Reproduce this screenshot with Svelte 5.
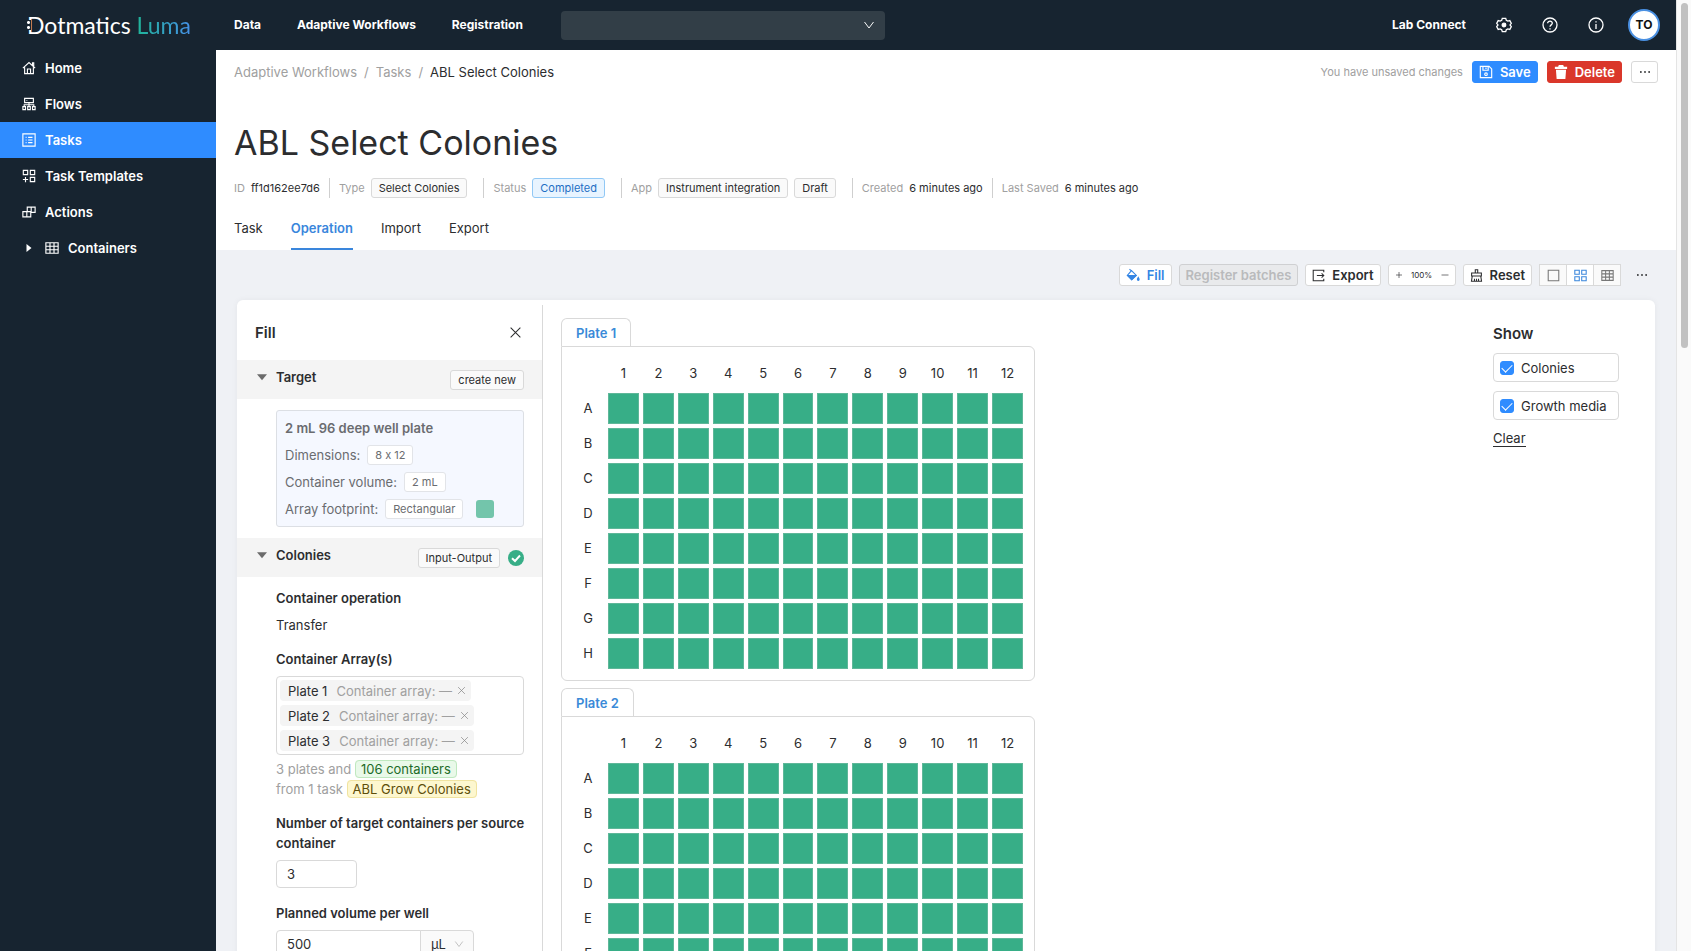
<script lang="ts">
	type NavItem = { label: string; icon: string; active?: boolean; nested?: boolean };

	const topLinks = ['Data', 'Adaptive Workflows', 'Registration'];

	const navItems: NavItem[] = [
		{ label: 'Home', icon: 'home' },
		{ label: 'Flows', icon: 'flows' },
		{ label: 'Tasks', icon: 'tasks', active: true },
		{ label: 'Task Templates', icon: 'templates' },
		{ label: 'Actions', icon: 'actions' },
		{ label: 'Containers', icon: 'table', nested: true }
	];

	const tabs = ['Task', 'Operation', 'Import', 'Export'];
	const rows = ['A', 'B', 'C', 'D', 'E', 'F', 'G', 'H'];
	const columns = Array.from({ length: 12 }, (_, i) => i + 1);
	const plates = ['Plate 1', 'Plate 2', 'Plate 3'];

	let activeTab = $state('Operation');
	let view = $state('grid');
	let zoom = $state(100);
	let selected = $state([...plates]);
	let targetCount = $state('3');
	let volume = $state('500');
	let layers = $state([
		{ id: 'colonies', label: 'Colonies', checked: true },
		{ id: 'growth', label: 'Growth media', checked: true }
	]);

	function removePlate(name: string) {
		selected = selected.filter((p) => p !== name);
	}

	function clearLayers() {
		layers.forEach((l) => (l.checked = false));
	}
</script>

{#snippet icon(name: string, size: number = 14)}
	<svg class="icon" width={size} height={size} viewBox="0 0 16 16" aria-hidden="true">
		{#if name === 'home'}
			<path d="M1 8.2 8 1.8l7 6.4M3 7v7.5h10V7M12 5V2.2h1.4v4M6.2 14.5V9.2h3.6v5.3" />
		{:else if name === 'flows'}
			<path d="M3 1.5h10v5H3zM5.2 4h.8M8 6.5V11M2.5 11V8.8h11V11M1 11h3v3.5H1zM6.5 11h3v3.5h-3zM12 11h3v3.5h-3z" />
		{:else if name === 'tasks'}
			<path d="M1 1h14v14H1zM4.2 5h1M7 5h5M4.2 8h1M7 8h5M4.2 11h1M7 11h5" />
		{:else if name === 'templates'}
			<path d="M1.5 1.5h5v5h-5zM9.5 1.5h5v5h-5zM9.5 9.5h5v5h-5zM4 9v6M1 12h6" />
		{:else if name === 'actions'}
			<path d="M1 7.5h9v6H1zM5.5 7.5v6M6 7.5v-5h9v6h-5M10.5 2.5v6" />
		{:else if name === 'table'}
			<path d="M1 2h14v12H1zM1 6h14M1 10h14M5.7 2v12M10.3 2v12" />
		{:else if name === 'gear'}
			<path d="M6.3 1.3h3.4l.6 1.9 1.5.9 2-.5 1.5 2.7L14 7.9l1.3 1.8-1.5 2.7-2-.5-1.5.9-.6 1.9H6.3l-.6-1.9-1.5-.9-2 .5L.7 9.7 2 7.9.7 6.3l1.5-2.7 2 .5 1.5-.9z" />
			<circle cx="8" cy="8" r="1.8" fill="currentColor" />
		{:else if name === 'help'}
			<circle cx="8" cy="8" r="7" />
			<path d="M5.6 6.3C5.6 3.4 10.5 3.6 10.3 6.3 10.2 7.9 8 7.9 8 9.8M8 11.2v1.2" />
		{:else if name === 'info'}
			<circle cx="8" cy="8" r="7" />
			<path d="M8 4.2v1.3M8 7v5" />
		{:else if name === 'save'}
			<path d="M1.5 1.5h10l3 3v10h-13zM4.5 1.5V6h6V1.5M8 2.8v1.8" />
			<circle cx="8" cy="10.5" r="1.5" />
		{:else if name === 'trash'}
			<path class="solid" d="M5.5 0h5l.8 2H15v2.5H1V2h3.7zM2.200 5.500h11.600L13 16H3z" />
		{:else if name === 'fill'}
			<path d="M4 1.200 6 3.200M6.300 3 11.800 8.500 6.500 13.500 1.500 8.500z" />
			<path class="solid" d="M1 8h11.500l-6 6.300z" />
			<path class="solid" d="M14 9.500c.9 1.700 1.600 2.600 1.600 3.700a1.600 1.600 0 0 1-3.200 0c0-1.100.8-2 1.600-3.700z" />
		{:else if name === 'export'}
			<path d="M14.500 4V1.500h-13v13h13V12M6 8h8.500M11.800 5.300 14.500 8l-2.700 2.700" />
		{:else if name === 'reset'}
			<path d="M6.500 5V1h3v4M2 5h12v3.500H2zM2.800 8.500 1.800 15h12.400l-1-6.500M5.500 15v-3M8 15v-3M10.500 15v-3" />
		{:else if name === 'square'}
			<path d="M1.500 1.500h13v13h-13z" />
		{:else if name === 'grid'}
			<path d="M1 1.500h5.500v5H1zM9.500 1.500H15v5H9.500zM1 9.500h5.500v5H1zM9.500 9.500H15v5H9.500z" />
		{:else if name === 'chevron'}
			<path d="M2 4l6 8 6-8" />
		{:else if name === 'close'}
			<path d="M2 2l12 12M14 2 2 14" />
		{:else if name === 'plus'}
			<path d="M8 2v12M2 8h12" />
		{:else if name === 'minus'}
			<path d="M1 8h14" />
		{:else if name === 'more'}
			<circle class="solid" cx="2.500" cy="8" r="1.200" />
			<circle class="solid" cx="8" cy="8" r="1.200" />
			<circle class="solid" cx="13.500" cy="8" r="1.200" />
		{:else if name === 'done'}
			<circle class="done" cx="8" cy="8" r="8" />
			<path class="done-tick" d="M4 8.200 7 11l5-5.500" />
		{:else if name === 'caret-right'}
			<path class="solid" d="M4 1.500 12 8l-8 6.500z" />
		{:else if name === 'caret-down'}
			<path class="solid" d="M0 3.500h16L8 13z" />
		{/if}
	</svg>
{/snippet}

<div class="window">
	<div class="app">
		<header class="topbar">
			<a class="logo" href="#home"><span class="brand">Dotmatics</span> <span class="luma">Luma</span></a>
			<nav class="top-links">
				{#each topLinks as link}
					<a href="#{link}">{link}</a>
				{/each}
			</nav>
			<div class="search">
				<select aria-label="Workspace"><option></option></select>
				{@render icon('chevron', 12)}
			</div>
			<div class="top-right">
				<a href="#lab-connect">Lab Connect</a>
				<button aria-label="Settings">{@render icon('gear', 16)}</button>
				<button aria-label="Help">{@render icon('help', 16)}</button>
				<button aria-label="Information">{@render icon('info', 16)}</button>
				<button class="avatar">TO</button>
			</div>
		</header>

		<div class="body">
			<nav class="sidebar">
				{#each navItems as item}
					<a href="#{item.label}" class:active={item.active}>
						{#if item.nested}
							<span class="expander">{@render icon('caret-right', 10)}</span>
						{/if}
						{@render icon(item.icon)}
						{item.label}
					</a>
				{/each}
			</nav>

			<main>
				<div class="page-head">
					<div class="crumb-row">
						<div class="crumbs">
							<a href="#workflows">Adaptive Workflows</a>
							<span>/</span>
							<a href="#tasks">Tasks</a>
							<span>/</span>
							<span class="current">ABL Select Colonies</span>
						</div>
						<div class="head-actions">
							<span class="unsaved">You have unsaved changes</span>
							<button class="btn primary">{@render icon('save')}Save</button>
							<button class="btn danger">{@render icon('trash')}Delete</button>
							<button class="btn more" aria-label="More">{@render icon('more', 12)}</button>
						</div>
					</div>

					<h1>ABL Select Colonies</h1>

					<div class="meta">
						<div><span>ID</span><b>ff1d162ee7d6</b></div>
						<div class="tagged"><span>Type</span><em class="tag">Select Colonies</em></div>
						<div class="tagged"><span>Status</span><em class="tag blue">Completed</em></div>
						<div class="tagged">
							<span>App</span><em class="tag">Instrument integration</em><em class="tag">Draft</em>
						</div>
						<div><span>Created</span><b>6 minutes ago</b></div>
						<div><span>Last Saved</span><b>6 minutes ago</b></div>
					</div>

					<div class="tabs" role="tablist">
						{#each tabs as tab}
							<button
								role="tab"
								aria-selected={activeTab === tab}
								class:active={activeTab === tab}
								onclick={() => (activeTab = tab)}>{tab}</button
							>
						{/each}
					</div>
				</div>

				<div class="toolbar">
					<button class="btn link">{@render icon('fill')}Fill</button>
					<button class="btn" disabled>Register batches</button>
					<button class="btn">{@render icon('export', 13)}Export</button>
					<div class="zoom">
						<button aria-label="Zoom in" onclick={() => (zoom += 10)}>{@render icon('plus', 8)}</button>
						<span>{zoom}%</span>
						<button aria-label="Zoom out" onclick={() => (zoom -= 10)}>{@render icon('minus', 8)}</button>
					</div>
					<button class="btn">{@render icon('reset', 13)}Reset</button>
					<div class="views">
						{#each ['square', 'grid', 'table'] as v}
							<button aria-label="{v} view" class:active={view === v} onclick={() => (view = v)}>
								{@render icon(v, 13)}
							</button>
						{/each}
					</div>
					<button class="bare" aria-label="More options">{@render icon('more', 12)}</button>
				</div>

				<div class="card">
					<aside class="fill-panel">
						<div class="panel-title">
							<h2>Fill</h2>
							<button aria-label="Close">{@render icon('close', 13)}</button>
						</div>

						<div class="section-head">
							<h3>{@render icon('caret-down', 10)}Target</h3>
							<em class="tag">create new</em>
						</div>
						<div class="section">
							<div class="target">
								<h4>2 mL 96 deep well plate</h4>
								<p>Dimensions: <em class="tag">8 x 12</em></p>
								<p>Container volume: <em class="tag">2 mL</em></p>
								<p>Array footprint: <em class="tag">Rectangular</em><i class="swatch"></i></p>
							</div>
						</div>

						<div class="section-head">
							<h3>{@render icon('caret-down', 10)}Colonies</h3>
							<em class="tag">Input-Output</em>
							{@render icon('done', 16)}
						</div>
						<div class="section form">
							<h4>Container operation</h4>
							<p class="value">Transfer</p>

							<h4>Container Array(s)</h4>
							<div class="multi">
								{#each selected as plate}
									<span class="chip">
										{plate}
										<small>Container array: —</small>
										<button aria-label="Remove {plate}" onclick={() => removePlate(plate)}>
											{@render icon('close', 9)}
										</button>
									</span>
								{/each}
							</div>
							<p class="summary">
								3 plates and <mark class="green">106 containers</mark><br />
								from 1 task <mark>ABL Grow Colonies</mark>
							</p>

							<label for="target-count">Number of target containers per source container</label>
							<input id="target-count" class="count" type="text" bind:value={targetCount} />

							<label for="volume">Planned volume per well</label>
							<div class="with-unit">
								<input id="volume" type="text" bind:value={volume} />
								<div class="unit">
									<select aria-label="Unit"><option>µL</option></select>
									{@render icon('chevron', 10)}
								</div>
							</div>
						</div>
					</aside>

					<section class="plates">
						{#each plates as plate}
							<div class="plate">
								<button class="plate-tab">{plate}</button>
								<div class="plate-box">
									<table>
										<thead>
											<tr>
												<td class="corner"></td>
												{#each columns as col}
													<th scope="col">{col}</th>
												{/each}
											</tr>
										</thead>
										<tbody>
											{#each rows as row}
												<tr>
													<th scope="row">{row}</th>
													{#each columns as col}
														<td class="well" aria-label="{row}{col}"></td>
													{/each}
												</tr>
											{/each}
										</tbody>
									</table>
								</div>
							</div>
						{/each}
					</section>

					<aside class="show-panel">
						<h2>Show</h2>
						{#each layers as layer}
							<label for={layer.id}>
								<input id={layer.id} type="checkbox" bind:checked={layer.checked} />
								{layer.label}
							</label>
						{/each}
						<button onclick={clearLayers}>Clear</button>
					</aside>
				</div>
			</main>
		</div>
	</div>
	<div class="scroll-track"><div class="scroll-thumb"></div></div>
</div>

<style>
	:global(body) {
		overflow: hidden;
	}

	.window {
		--navy: #172430;
		--blue: #2f8cff;
		--text: #2c2d2f;
		--muted: #a0a0a0;
		--border: #d9d9d9;
		--green: #37ae87;
		display: flex;
		height: 100vh;
		overflow: hidden;
		font-family: Inter, 'Liberation Sans', sans-serif;
		font-size: 13px;
		line-height: 20px;
		font-feature-settings: 'calt' 0;
		color: var(--text);
	}

	.window * {
		box-sizing: border-box;
	}

	h1, h2, h3, h4, p {
		margin: 0;
	}

	h3, h4 {
		font-size: 13px;
		font-weight: 600;
	}

	a {
		color: inherit;
		text-decoration: none;
	}

	em, i {
		font-style: normal;
	}

	button {
		display: flex;
		align-items: center;
		justify-content: center;
		padding: 0;
		border: 0;
		background: none;
		color: inherit;
		font: inherit;
		cursor: pointer;
	}

	input, select {
		font: inherit;
		color: inherit;
	}

	.icon {
		flex: none;
		fill: none;
		stroke: currentColor;
		stroke-width: 1.3;
	}

	.icon .solid {
		fill: currentColor;
		stroke: none;
	}

	.icon .done {
		fill: var(--green);
		stroke: none;
	}

	.icon .done-tick {
		stroke: #fff;
		stroke-width: 2;
	}

	.app {
		flex: 1;
		min-width: 0;
		display: flex;
		flex-direction: column;
	}

	/* Top bar */
	.topbar {
		flex: none;
		display: flex;
		align-items: center;
		height: 50px;
		padding-right: 16px;
		background: var(--navy);
		color: #fff;
		font-size: 12px;
		font-weight: 700;
	}

	.logo {
		position: relative;
		width: 234px;
		padding-left: 27px;
		font-family: Lato, sans-serif;
		font-size: 23px;
		font-weight: 400;
		line-height: 28px;
		white-space: nowrap;
	}

	.logo::before {
		content: '';
		position: absolute;
		left: 26px;
		top: 9px;
		width: 5px;
		height: 10px;
		background: radial-gradient(circle, #fff 1px, var(--navy) 2px) 0 0 / 5px 5px;
	}

	.luma {
		background: linear-gradient(90deg, #20b49a, #4591e8);
		background-clip: text;
		color: transparent;
	}

	.top-links {
		display: flex;
		gap: 36px;
		width: 327px;
		white-space: nowrap;
	}

	.search {
		position: relative;
		width: 324px;
	}

	.search select {
		display: block;
		width: 100%;
		height: 29px;
		border: 0;
		border-radius: 4px;
		background: #323e47;
		appearance: none;
	}

	.search .icon {
		position: absolute;
		right: 10px;
		top: 8px;
	}

	.top-right {
		display: flex;
		align-items: center;
		gap: 30px;
		margin-left: auto;
	}

	.top-right .avatar {
		width: 32px;
		height: 32px;
		margin-left: -6px;
		border: 2px solid #4a90e2;
		border-radius: 50%;
		background: #fff;
		color: #111;
	}

	.body {
		flex: 1;
		display: flex;
		min-height: 0;
	}

	.sidebar {
		flex: none;
		width: 216px;
		background: var(--navy);
		color: #fff;
		font-weight: 600;
	}

	.sidebar a {
		display: flex;
		align-items: center;
		gap: 9px;
		height: 36px;
		padding-left: 22px;
	}

	.sidebar a.active {
		background: var(--blue);
	}

	.expander {
		display: flex;
		justify-content: center;
		width: 14px;
	}

	main {
		flex: 1;
		min-width: 0;
		overflow-y: auto;
		scrollbar-width: none;
		background: #eff1f5;
	}

	.page-head {
		padding: 11px 18px 0;
		background: #fff;
	}

	.crumb-row,
	.crumbs,
	.head-actions {
		display: flex;
		align-items: center;
	}

	.crumb-row {
		justify-content: space-between;
	}

	.crumbs {
		gap: 7px;
		color: var(--muted);
	}

	.crumbs .current {
		color: var(--text);
	}

	.head-actions {
		gap: 9px;
	}

	.unsaved {
		font-size: 11px;
		color: var(--muted);
	}

	.btn {
		gap: 7px;
		height: 22px;
		padding: 0 6px;
		border: 1px solid var(--border);
		border-radius: 3px;
		background: #fff;
		font-weight: 600;
	}

	.btn.primary {
		border-color: var(--blue);
		background: var(--blue);
		color: #fff;
	}

	.btn.danger {
		border-color: #da372a;
		background: #da372a;
		color: #fff;
	}

	.btn.link {
		color: #3485e4;
	}

	.btn.more {
		width: 27px;
	}

	.btn:disabled {
		border-color: #cfd0d2;
		background: #e9eaec;
		color: #b9babc;
	}

	h1 {
		margin-top: 36px;
		font-size: 34px;
		font-weight: 400;
		line-height: 48px;
	}

	.meta {
		display: flex;
		margin-top: 11px;
		font-size: 11px;
		white-space: nowrap;
	}

	.meta div {
		display: flex;
		align-items: center;
		gap: 6px;
		padding-right: 9px;
	}

	.meta div.tagged {
		padding-right: 16px;
	}

	.meta div + div {
		padding-left: 9px;
		border-left: 1px solid #cfcfcf;
	}

	.meta span {
		color: var(--muted);
	}

	.meta b {
		font-weight: 400;
	}

	.tag {
		height: 20px;
		padding: 0 7px;
		border: 1px solid var(--border);
		border-radius: 3px;
		background: #fafafa;
		font-size: 11px;
		line-height: 18px;
	}

	.tag.blue {
		border-color: #91c8f5;
		background: #e8f4ff;
		color: #1f6fc4;
	}

	.tabs {
		display: flex;
		gap: 28px;
		margin-top: 10px;
	}

	.tabs button {
		height: 42px;
		border-bottom: 2px solid transparent;
	}

	.tabs button.active {
		border-color: #3a86dc;
		color: #3a86dc;
		font-weight: 600;
	}

	/* Toolbar */
	.toolbar {
		display: flex;
		justify-content: flex-end;
		gap: 7px;
		padding: 14px 20px;
	}

	.zoom {
		display: flex;
		align-items: center;
		justify-content: space-between;
		width: 68px;
		height: 22px;
		padding: 0 6px;
		border: 1px solid var(--border);
		border-radius: 3px;
		background: #fff;
		font-size: 8px;
	}

	.views {
		display: flex;
		color: #777;
	}

	.views button {
		width: 28px;
		height: 22px;
		margin-left: -1px;
		border: 1px solid var(--border);
		background: #fafafa;
	}

	.views button:first-child {
		margin-left: 0;
	}

	.views .active {
		background: #fff;
		color: #3a86dc;
	}

	.bare {
		width: 28px;
	}

	/* Card */
	.card {
		display: flex;
		align-items: flex-start;
		margin: 0 21px;
		padding-top: 5px;
		border-radius: 6px;
		background: #fff;
		box-shadow: 0 0 6px rgba(0, 0, 0, 0.05);
	}

	.fill-panel {
		flex: none;
		align-self: stretch;
		width: 306px;
		border-right: 1px solid var(--border);
	}

	.panel-title {
		display: flex;
		align-items: center;
		justify-content: space-between;
		height: 55px;
		padding: 0 20px 0 18px;
	}

	h2 {
		font-size: 15px;
		font-weight: 600;
		line-height: 20px;
	}

	.section-head {
		display: flex;
		align-items: center;
		gap: 8px;
		height: 39px;
		padding: 0 18px 0 20px;
		background: #f4f4f4;
	}

	.section-head h3 {
		display: flex;
		align-items: center;
		gap: 9px;
		margin-right: auto;
		padding-bottom: 5px;
	}

	.section-head h3 .icon {
		color: #6b6b6b;
	}

	.section {
		padding: 11px 18px 11px 39px;
	}

	.target {
		height: 117px;
		padding: 3px 8px;
		border: 1px solid #dcdfe4;
		border-radius: 3px;
		background: #f5f8ff;
		color: #6a6c70;
	}

	.target h4,
	.target p {
		display: flex;
		align-items: center;
		gap: 7px;
		height: 27px;
	}

	.target .tag {
		border-color: #e2e4e8;
		background: #fff;
	}

	.swatch {
		width: 18px;
		height: 18px;
		margin-left: 6px;
		border-radius: 3px;
		background: #73c5ab;
	}

	.form .value {
		margin: 7px 0 14px;
	}

	.multi {
		display: flex;
		flex-direction: column;
		align-items: flex-start;
		gap: 4px;
		min-height: 29px;
		margin-top: 7px;
		padding: 3px;
		border: 1px solid var(--border);
		border-radius: 4px;
	}

	.chip {
		display: flex;
		align-items: center;
		gap: 5px;
		height: 21px;
		padding: 0 5px 0 8px;
		border-radius: 4px;
		background: #f4f4f4;
	}

	.chip small {
		margin-left: 4px;
		color: #a0a0a0;
		font-size: inherit;
	}

	.chip button {
		color: #888;
	}

	.summary {
		margin: 4px 0 14px;
		color: var(--muted);
	}

	mark {
		padding: 0 5px;
		border: 1px solid #f0e3a0;
		border-radius: 4px;
		background: #fdf7cf;
		color: #5d4e0a;
	}

	mark.green {
		border-color: #bfe8bf;
		background: #e9f9e9;
		color: #1d6b28;
	}

	.form label {
		display: block;
		margin-right: -12px;
		font-weight: 600;
	}

	.form input {
		display: block;
		width: 145px;
		height: 28px;
		margin-top: 7px;
		padding: 0 10px;
		border: 1px solid var(--border);
		border-radius: 4px;
		background: #fff;
	}

	.form .count {
		width: 81px;
		margin-bottom: 15px;
	}

	.with-unit {
		display: flex;
		margin-top: 7px;
	}

	.with-unit input {
		margin: 0;
		border-radius: 4px 0 0 4px;
	}

	.unit {
		position: relative;
	}

	.unit select {
		width: 54px;
		height: 28px;
		margin-left: -1px;
		padding: 0 10px;
		border: 1px solid var(--border);
		border-radius: 0 4px 4px 0;
		background: #fafafa;
		appearance: none;
	}

	.unit .icon {
		position: absolute;
		right: 10px;
		top: 9px;
		color: #b5b5b5;
	}

	/* Plates */
	.plates {
		flex: 1;
		display: flex;
		flex-direction: column;
		gap: 7px;
		padding: 13px 18px;
	}

	.plate-tab {
		height: 28px;
		padding: 0 14px;
		border: 1px solid var(--border);
		border-bottom: 0;
		border-radius: 6px 6px 0 0;
		color: #3a8ad8;
		font-weight: 600;
	}

	.plate-box {
		width: 474px;
		padding: 8px 7px 7px 6px;
		border: 1px solid var(--border);
		border-radius: 0 6px 6px 6px;
	}

	table {
		width: 100%;
		table-layout: fixed;
		border-collapse: separate;
		border-spacing: 4px;
	}

	th {
		height: 30px;
		padding: 0 0 2px;
		font-weight: 400;
	}

	.corner {
		width: 32px;
	}

	.well {
		height: 31px;
		padding: 0;
		border: 1px solid #5fb799;
		background: var(--green);
	}

	.show-panel {
		flex: none;
		display: flex;
		flex-direction: column;
		align-items: flex-start;
		gap: 9px;
		width: 162px;
		padding-top: 19px;
	}

	.show-panel label {
		display: flex;
		align-items: center;
		gap: 7px;
		width: 126px;
		height: 29px;
		padding-left: 6px;
		border: 1px solid var(--border);
		border-radius: 4px;
	}

	.show-panel input {
		display: flex;
		justify-content: center;
		width: 14px;
		height: 14px;
		margin: 0;
		border: 1px solid var(--border);
		border-radius: 3px;
		appearance: none;
	}

	.show-panel input:checked {
		border-color: var(--blue);
		background: var(--blue);
	}

	.show-panel input:checked::after {
		content: '';
		width: 5px;
		height: 9px;
		border: solid #fff;
		border-width: 0 1px 1px 0;
		transform: rotate(45deg);
	}

	.show-panel button {
		height: 18px;
		border-bottom: 1px solid var(--text);
	}

	.scroll-track {
		flex: none;
		width: 15px;
		padding: 3px 3px 0 4px;
		border-left: 1px solid #e4e4e4;
		background: #fafafa;
	}

	.scroll-thumb {
		height: 345px;
		border-radius: 4px;
		background: #c1c1c1;
	}
</style>
